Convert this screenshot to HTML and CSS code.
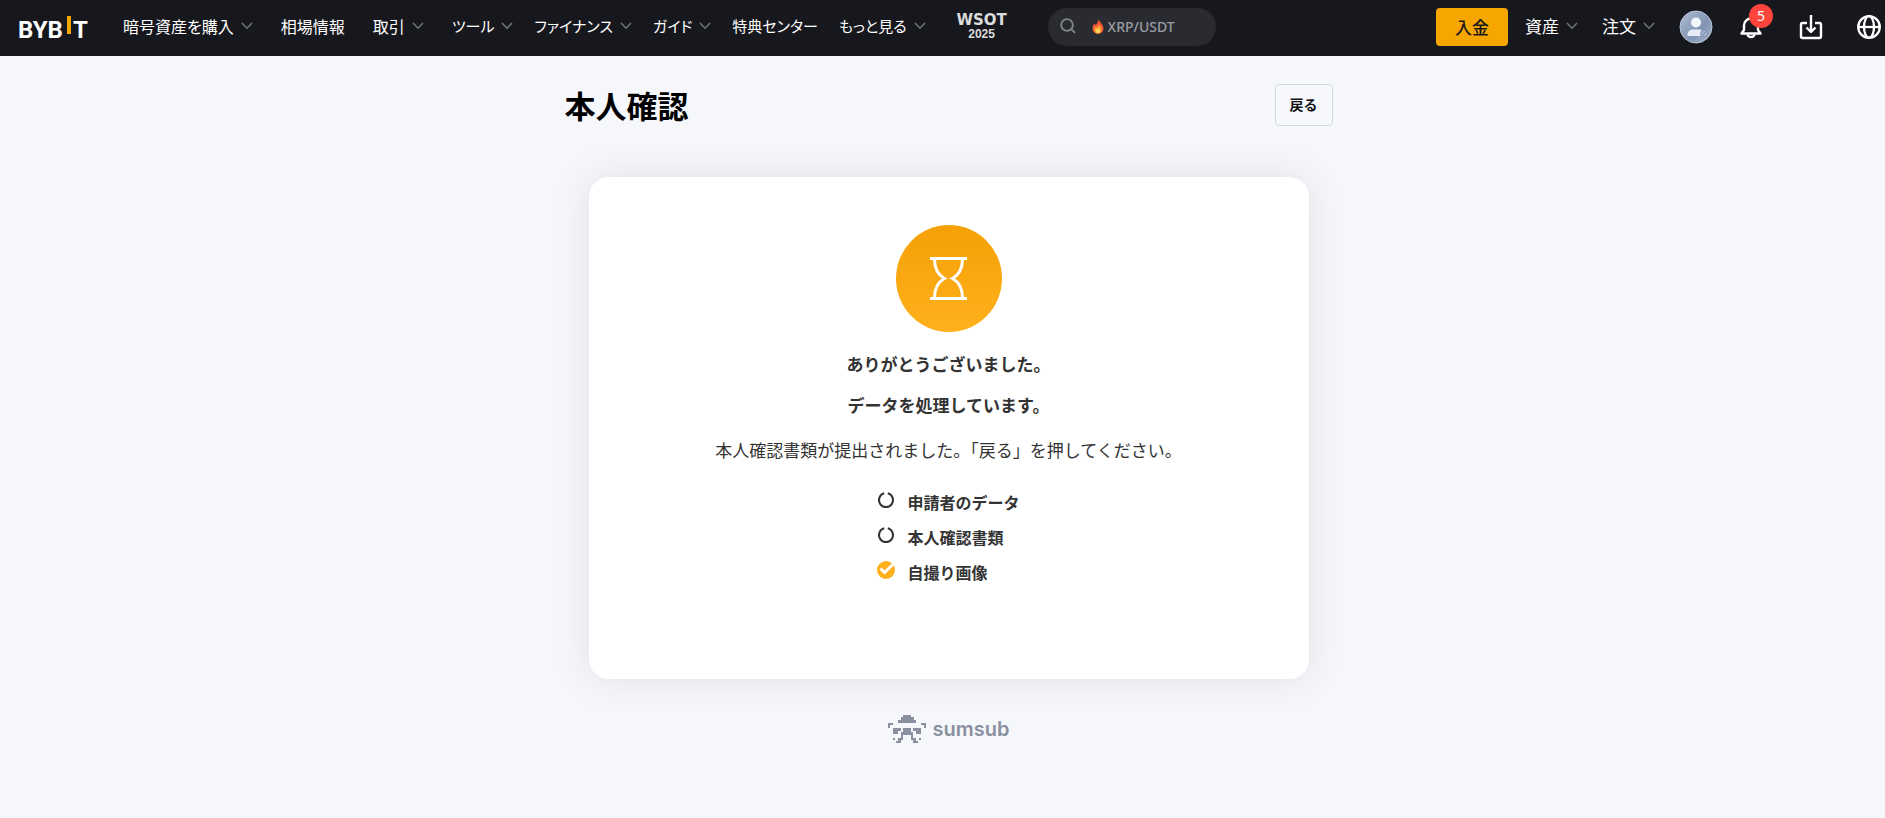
FILE: index.html
```html
<!DOCTYPE html>
<html lang="ja">
<head>
<meta charset="utf-8">
<title>本人確認</title>
<link rel="stylesheet" href="styles.css">
</head>
<body>
<svg class="defs" aria-hidden="true">
  <symbol id="chev" viewBox="0 0 12 8"><path d="M1 1l5 5.200 5-5.200" fill="none" stroke="#71757a" stroke-width="1.500"/></symbol>
</svg>
<header class="topbar">
  <a class="logo" href="#" aria-label="BYBIT">
    <svg width="72" height="32" viewBox="0 0 72 32"><text class="logo-text" x="0" y="26">BYB</text><rect x="49" y="4" width="4" height="18" fill="#f7a600"/><text class="logo-text" x="55" y="26">T</text></svg>
  </a>
  <nav class="nav">
    <a class="wide" href="#">暗号資産を購入<svg class="chev"><use href="#chev"/></svg></a>
    <a class="wide" href="#">相場情報</a>
    <a class="wide" href="#">取引<svg class="chev"><use href="#chev"/></svg></a>
    <a href="#">ツール<svg class="chev"><use href="#chev"/></svg></a>
    <a href="#">ファイナンス<svg class="chev"><use href="#chev"/></svg></a>
    <a href="#">ガイド<svg class="chev"><use href="#chev"/></svg></a>
    <a href="#">特典センター</a>
    <a href="#">もっと見る<svg class="chev"><use href="#chev"/></svg></a>
    <a class="wsot" href="#"><span class="wsot-name">WSOT</span><span class="wsot-year">2025</span></a>
  </nav>
  <label class="search">
    <svg width="16" height="16" viewBox="0 0 16 16" fill="none" stroke="#85888d" stroke-width="1.800"><circle cx="7" cy="7" r="5.800"/><path d="M11.200 11.200L15 14.800"/></svg>
    <svg class="flame" width="12" height="15" viewBox="0 0 12 15"><path d="M6.500 0C7 3 11.500 5 11.500 9.600A5.500 5.300 0 0 1 .5 9.600C.5 7 1.800 5.800 2.400 4.300L3.500 6C5.500 4.500 6.200 2.300 6.500 0z" fill="#f4563a"/><path d="M6.800 5.500c.6 1.800 2.900 2.800 2.900 5A3.700 3.900 0 0 1 2.300 10.500c0-1.400.8-2 1.200-3l1 1c1.300-.7 2-1.700 2.300-3z" fill="#fda238"/><path d="M6.300 9c.4 1 1.700 1.500 1.700 2.900a2 2.200 0 0 1-4 0c0-1.400 1.800-1.700 2.300-2.900z" fill="#ffd75a"/></svg>
    <input type="text" placeholder="XRP/USDT" aria-label="検索">
  </label>
  <div class="actions">
    <button class="deposit" type="button">入金</button>
    <a class="menu" href="#">資産<svg class="chev"><use href="#chev"/></svg></a>
    <a class="menu" href="#">注文<svg class="chev"><use href="#chev"/></svg></a>
    <button class="icon avatar" type="button" aria-label="アカウント">
      <svg width="34" height="34" viewBox="0 0 34 34"><defs><linearGradient id="av" x1="0" y1="0" x2="1" y2="1"><stop offset="0" stop-color="#b0bfd5"/><stop offset=".6" stop-color="#8093b2"/><stop offset="1" stop-color="#a9b9d1"/></linearGradient></defs><circle cx="17" cy="17" r="16" fill="url(#av)" stroke="#bac7da" stroke-width="1"/><circle cx="17" cy="12.500" r="5" fill="#f3f6fb"/><path d="M8.500 26v-1.500c0-3 2.500-5 5.500-5h6c3 0 5.500 2 5.500 5V26z" fill="#e6ecf6"/><circle cx="25" cy="23.500" r="3.500" fill="#a3b3cd" stroke="#7487a6" stroke-width=".8"/><path d="M23 25.500l4-4" stroke="#7487a6"/></svg>
    </button>
    <button class="icon bell" type="button" aria-label="通知 5件">
      <svg width="22" height="24" viewBox="0 0 22 24" fill="none" stroke="#fff" stroke-width="2.400" stroke-linejoin="round"><path d="M4 10.500a7 7 0 0 1 14 0v4.500l2.500 3.500h-19L4 15z"/><path d="M7.500 19.500c.8 3.400 6.200 3.400 7 0"/></svg>
      <span class="badge">5</span>
    </button>
    <button class="icon" type="button" aria-label="ダウンロード">
      <svg width="24" height="26" viewBox="0 0 24 26" fill="none" stroke="#fff" stroke-width="2.400" stroke-linejoin="round"><path d="M8 9H3.500Q2 9 2 10.500v12Q2 24 3.500 24h17q1.500 0 1.500-1.500v-12Q22 9 20.500 9H16M12 1v17M7.500 13.500L12 18l4.500-4.500"/></svg>
    </button>
    <button class="icon" type="button" aria-label="言語">
      <svg width="24" height="24" viewBox="0 0 24 24" fill="none" stroke="#fff" stroke-width="2.300"><circle cx="12" cy="12" r="10.800"/><ellipse cx="12" cy="12" rx="5" ry="10.800"/><path d="M1.200 12h21.600"/></svg>
    </button>
  </div>
</header>
<main class="page">
  <div class="page-head">
    <h1>本人確認</h1>
    <button class="back" type="button">戻る</button>
  </div>
  <section class="card">
    <svg class="hourglass" width="106" height="107" viewBox="0 0 106 107"><defs><linearGradient id="og" x1="0" y1="0" x2="0" y2="1"><stop offset="0" stop-color="#f5a106"/><stop offset="1" stop-color="#ffb01c"/></linearGradient></defs><ellipse cx="53" cy="53.500" rx="53" ry="53.500" fill="url(#og)"/><g fill="none" stroke="#fff" stroke-width="3"><path d="M34 33.500h37M34 73.500h37M38.500 34c0 9 3.500 16 10 19.500C42 57 38.500 64 38.500 73M66.500 34c0 9-3.500 16-10 19.500C63 57 66.500 64 66.500 73"/></g></svg>
    <h2>ありがとうございました。</h2>
    <h2>データを処理しています。</h2>
    <p class="message">本人確認書類が提出されました。「戻る」を押してください。</p>
    <ul class="steps">
      <li><svg width="18" height="18" viewBox="0 0 18 18"><path d="M10.800 2.300a7 7 0 1 1-3.600 0" fill="none" stroke="#333" stroke-width="2"/></svg>申請者のデータ</li>
      <li><svg width="18" height="18" viewBox="0 0 18 18"><path d="M10.800 2.300a7 7 0 1 1-3.600 0" fill="none" stroke="#333" stroke-width="2"/></svg>本人確認書類</li>
      <li><svg width="18" height="18" viewBox="0 0 18 18"><circle cx="9" cy="9" r="9" fill="#ffb01c"/><path d="M3.500 7.500L7.500 11.500L15.800 3.500" fill="none" stroke="#fff" stroke-width="3"/></svg>自撮り画像</li>
    </ul>
  </section>
  <a class="sumsub" href="#">
    <svg width="38" height="28" viewBox="0 0 38 28" fill="#8a90a0" shape-rendering="crispEdges"><path d="M15 0h8v2h3v3h2v3H10V5h3V2h2zM0 8h5v2H2v3H0zM33 8h5v5h-2v-3h-3zM5 13h8v3h-3v3H5zM25 13h8v6h-5v-3h-3zM15 13h8v4h2v6h3v3h2v2h-5v-3h-2v-5h-8v5h-2v3H8v-2h2v-3h3v-6h2zM5 23h2v2H5zM31 23h2v2h-2z"/></svg>
    <span>sumsub</span>
  </a>
</main>
</body>
</html>
```
FILE: styles.css
```css
* { box-sizing: border-box; }
body {
  margin: 0;
  background: #f5f7fb;
  color: #333;
  font-family: "Noto Sans CJK JP", sans-serif;
}
a { color: inherit; text-decoration: none; }
button { font-family: inherit; cursor: pointer; }
.defs { display: none; }

.topbar {
  display: flex;
  align-items: center;
  height: 56px;
  padding: 0 4px 0 18px;
  background: #17181e;
  color: #fff;
  font-size: 17px;
  line-height: 24px;
  white-space: nowrap;
}
.logo { display: flex; margin-right: 33px; }
.logo-text { font: 700 24px Roboto, sans-serif; fill: #fff; }
.nav {
  display: flex;
  align-items: center;
  gap: 21px;
  padding-bottom: 4px;
  font-size: 15px;
  font-feature-settings: "palt";
}
.nav a, .menu { display: flex; align-items: center; gap: 7px; }
.nav .wide { margin-right: 7px; font-size: 16px; }
.chev { width: 12px; height: 8px; }
.nav .wsot { flex-direction: column; gap: 0; width: 70px; color: #dcdcdc; }
.wsot-name { font: 700 15px/16px "DejaVu Sans", sans-serif; }
.wsot-year { font: 700 12px/12px "Liberation Sans", sans-serif; }

.search {
  display: flex;
  align-items: center;
  width: 168px;
  height: 38px;
  margin-bottom: 2px;
  margin-left: 31px;
  padding: 0 12px 2px;
  border-radius: 19px;
  background: #2a2b30;
}
.flame { margin: 0 4px 0 16px; }
.search input {
  flex: 1;
  min-width: 0;
  padding: 0;
  border: 0;
  outline: 0;
  background: none;
  color: #fff;
  font: 500 14px "Noto Sans", sans-serif;
}
.search input::placeholder { color: #999da6; opacity: 1; }

.actions { display: flex; align-items: center; margin-left: auto; padding-bottom: 2px; }
.deposit {
  width: 72px;
  height: 38px;
  padding: 0 0 2px;
  margin-right: 17px;
  border: 0;
  border-radius: 4px;
  background: #f7a600;
  color: #17181e;
  font-size: 17px;
  font-weight: 500;
}
.menu { margin-right: 24px; padding-bottom: 2px; }
.icon { display: flex; position: relative; padding: 0; border: 0; background: none; margin-left: 34px; }
.avatar { margin-left: 0; }
.bell { margin-left: 27px; margin-right: 3px; }
.badge {
  position: absolute;
  left: 9px;
  top: -11px;
  width: 24px;
  height: 24px;
  border-radius: 12px;
  background: #ff443b;
  color: #fff;
  font: 14px/24px "Noto Sans", sans-serif;
  text-align: center;
}

.page { max-width: 780px; margin: 0 auto; padding-left: 12px; }
.page-head { display: flex; align-items: center; justify-content: space-between; padding-top: 28px; }
h1 { margin: 0; color: #000; font-size: 31px; line-height: 40px; font-weight: 700; }
.back {
  width: 58px;
  height: 42px;
  padding: 0 0 2px;
  border: 1px solid #d5d8dd;
  border-radius: 4px;
  background: none;
  color: #121214;
  font-size: 14px;
  font-weight: 700;
}
.card {
  display: flex;
  flex-direction: column;
  align-items: center;
  margin: 51px 24px 0;
  padding: 48px 24px 95px;
  border-radius: 20px;
  background: #fff;
  box-shadow: 0 0 40px rgba(0, 0, 0, 0.09);
}
.hourglass { margin-bottom: 20px; }
h2 { margin: 0 0 17px; font-size: 17px; line-height: 24px; font-weight: 700; }
.message { margin: 4px 0 22px; font-size: 17px; line-height: 24px; }
.steps { display: grid; gap: 11px; margin: 6px 0 0; padding: 0; list-style: none; font-size: 16px; line-height: 24px; font-weight: 700; }
.steps li { display: flex; gap: 12px; }
.steps svg { margin-top: 1px; }
.sumsub { display: flex; align-items: center; justify-content: center; gap: 7px; margin-top: 36px; color: #8a90a0; }
.sumsub span { font: 600 20px/28px Inter, sans-serif; }
```
